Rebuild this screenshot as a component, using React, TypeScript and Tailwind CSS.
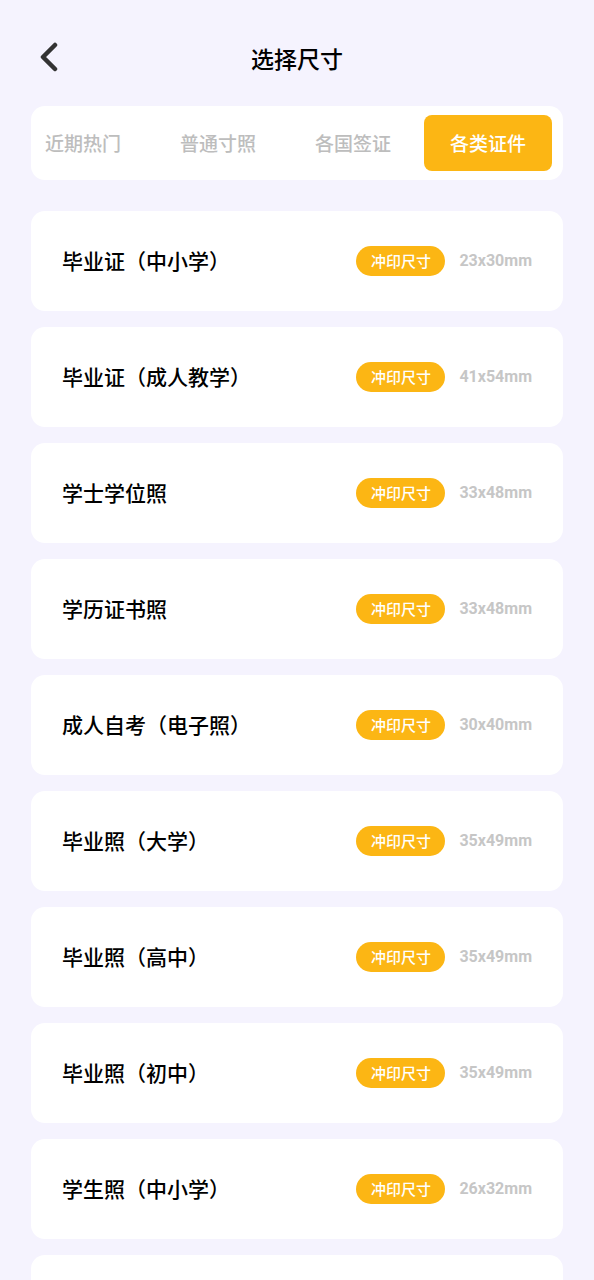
const tabs = ['近期热门', '普通寸照', '各国签证', '各类证件']

const items = [
  { name: '毕业证（中小学）', size: '23x30mm' },
  { name: '毕业证（成人教学）', size: '41x54mm' },
  { name: '学士学位照', size: '33x48mm' },
  { name: '学历证书照', size: '33x48mm' },
  { name: '成人自考（电子照）', size: '30x40mm' },
  { name: '毕业照（大学）', size: '35x49mm' },
  { name: '毕业照（高中）', size: '35x49mm' },
  { name: '毕业照（初中）', size: '35x49mm' },
  { name: '学生照（中小学）', size: '26x32mm' },
]

function SizeRow({ name, size }: { name: string; size: string }) {
  return (
    <div className="flex h-[100px] shrink-0 items-center justify-between rounded-[14px] bg-white px-[31px]">
      <span className="text-[21px] font-medium text-black">{name}</span>
      <div className="flex items-center gap-[14px]">
        <span className="flex h-[30px] w-[89px] items-center justify-center rounded-full bg-[#fcb614] text-[15px] font-medium text-white">
          冲印尺寸
        </span>
        <span className="font-['Roboto',sans-serif] text-[16px] font-bold text-[#c6c6c6]">{size}</span>
      </div>
    </div>
  )
}

export default function App() {
  return (
    <div className="h-[1280px] overflow-hidden bg-[#f5f3fe] font-['Noto_Sans_CJK_SC','Noto_Sans',sans-serif]">
      <header className="relative flex h-[106px] items-center justify-center pt-[10px]">
        <button className="absolute left-[36px] top-[42px]">
          <svg width="26" height="30" viewBox="0 0 26 30" fill="none">
            <path d="M19 3L7 15L19 27" stroke="#333" strokeWidth="4.5" strokeLinecap="round" strokeLinejoin="round" />
          </svg>
        </button>
        <h1 className="text-[23px] font-medium text-black">选择尺寸</h1>
      </header>

      <div className="mx-[31px] flex h-[74px] items-center justify-end gap-[7px] overflow-hidden rounded-[14px] bg-white pr-[11px]">
        {tabs.map((t, i) => (
          <div
            key={t}
            className={`flex h-[56px] w-[128px] shrink-0 items-center justify-center rounded-[8px] text-[19px] font-medium ${
              i === 3 ? 'bg-[#fcb614] text-white' : 'text-[#bdbdbd]'
            }`}
          >
            {t}
          </div>
        ))}
      </div>

      <div className="mx-[31px] mt-[31px] flex flex-col gap-[16px]">
        {items.map((it) => (
          <SizeRow key={it.name} name={it.name} size={it.size} />
        ))}
        <div className="h-[100px] shrink-0 rounded-[14px] bg-white" />
      </div>
    </div>
  )
}
